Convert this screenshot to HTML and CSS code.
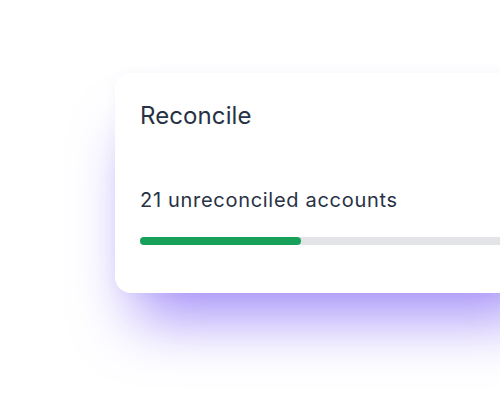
FILE: index.html
```html
<!DOCTYPE html>
<html>
<head>
<meta charset="utf-8">
<link rel="stylesheet" href="styles.css">
</head>
<body>
<div class="stage">
  <div class="card">
    <div class="title">Reconcile</div>
    <div class="count">21 unreconciled accounts</div>
    <div class="bar"><div class="fill" style="width: 161px"></div></div>
  </div>
</div>
</body>
</html>
```
FILE: styles.css
```css
html, body {
  margin: 0;
  padding: 0;
  background: #ffffff;
}
body {
  width: 500px;
  height: 418px;
  overflow: hidden;
  font-family: Inter, "Noto Sans", sans-serif;
}
.stage {
  padding: 73px 0 0 115px;
}
.card {
  box-sizing: border-box;
  width: 440px;
  height: 220px;
  padding: 27px 0 0 25px;
  background: #ffffff;
  border-radius: 16px;
  box-shadow: 0 0 14px rgba(90, 80, 160, 0.04),
              0 44px 60px -20px rgba(124, 92, 246, 0.7);
}
.title {
  font-size: 24px;
  line-height: 32px;
  color: #283245;
  letter-spacing: 0.1px;
}
.count {
  margin-top: 54px;
  font-size: 20px;
  line-height: 28px;
  color: #283245;
  letter-spacing: 0.7px;
}
.bar {
  margin-top: 23px;
  height: 8px;
  border-radius: 4px;
  background: #e2e4e7;
}
.fill {
  height: 8px;
  border-radius: 4px;
  background: #16a05a;
}
```
